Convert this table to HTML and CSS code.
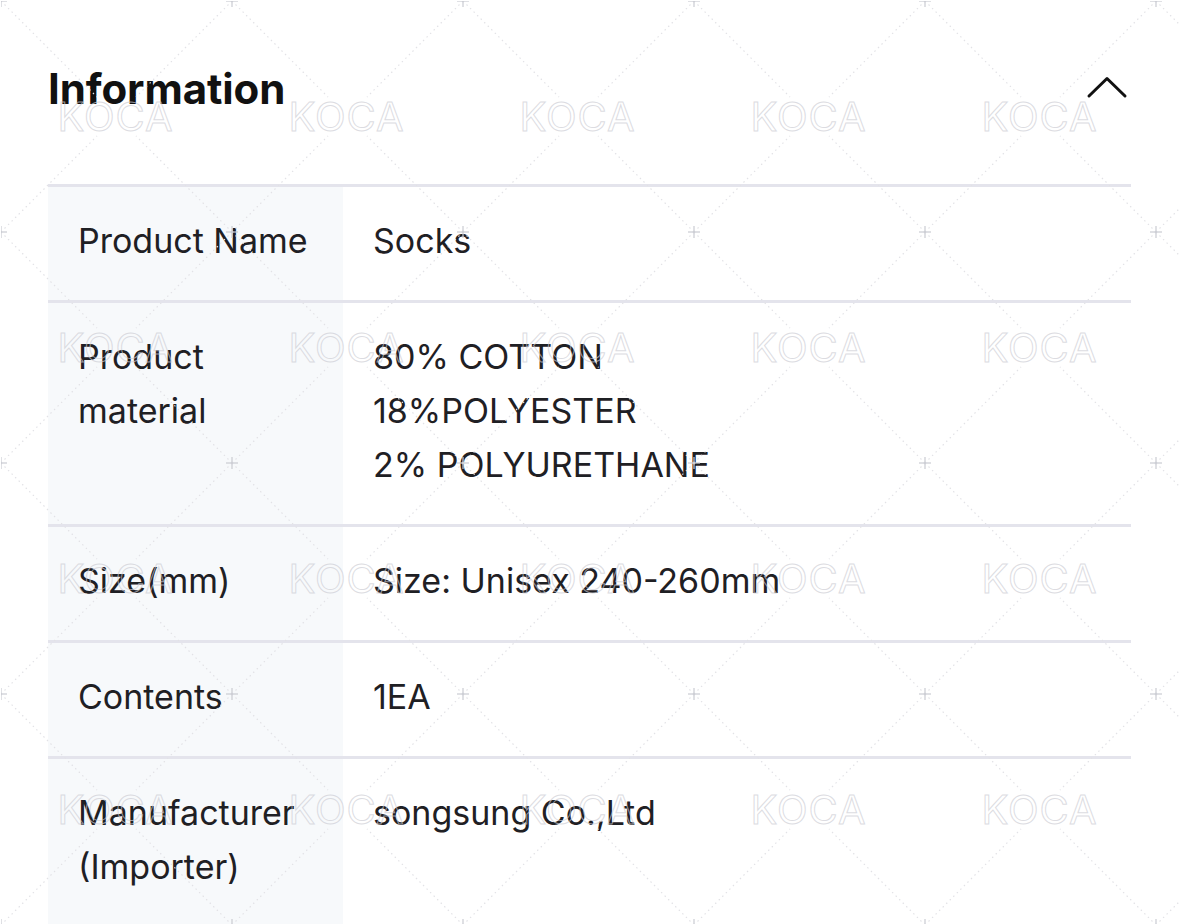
FILE: index.html
```html
<!DOCTYPE html>
<html lang="en">
<head>
    <meta charset="UTF-8">
    <meta name="viewport" content="width=device-width, initial-scale=1.0">
    <title>Product Information</title>
    <link rel="stylesheet" href="styles.css">
</head>
<body>
    <div class="page">
        <!-- Information section -->
        <section class="info">
            <div class="info-head">
                <h2 class="info-title">Information</h2>
                <button class="toggle-btn" aria-label="Collapse">
                    <svg width="42" height="24" viewBox="0 0 42 24">
                        <polyline points="3,20 21,2.5 39,20" fill="none" stroke="#111" stroke-width="3" stroke-linecap="round" stroke-linejoin="round"/>
                    </svg>
                </button>
            </div>

            <table class="info-table">
                <tr>
                    <th>Product Name</th>
                    <td>Socks</td>
                </tr>
                <tr>
                    <th>Product material</th>
                    <td>80% COTTON<br>18%POLYESTER<br>2% POLYURETHANE</td>
                </tr>
                <tr>
                    <th>Size(mm)</th>
                    <td>Size: Unisex 240-260mm</td>
                </tr>
                <tr>
                    <th>Contents</th>
                    <td>1EA</td>
                </tr>
                <tr>
                    <th>Manufacturer (Importer)</th>
                    <td>songsung Co.,Ltd</td>
                </tr>
            </table>
        </section>

        <!-- Watermark overlay -->
        <div class="watermark" aria-hidden="true">
            <svg class="wm-lines" width="100%" height="100%">
                <defs>
                    <pattern id="wmTile" width="231" height="231" patternUnits="userSpaceOnUse">
                        <g stroke="#e2e2e6" stroke-width="1.2" stroke-dasharray="1.5 3.5" fill="none">
                            <line x1="0" y1="0" x2="96" y2="96"/>
                            <line x1="231" y1="0" x2="135" y2="96"/>
                            <line x1="0" y1="231" x2="96" y2="135"/>
                            <line x1="231" y1="231" x2="135" y2="135"/>
                        </g>
                        <g stroke="#c9cbd2" stroke-width="1.2">
                            <line x1="-6" y1="0" x2="6" y2="0"/>
                            <line x1="0" y1="-6" x2="0" y2="6"/>
                            <line x1="225" y1="0" x2="237" y2="0"/>
                            <line x1="231" y1="-6" x2="231" y2="6"/>
                            <line x1="-6" y1="231" x2="6" y2="231"/>
                            <line x1="0" y1="225" x2="0" y2="237"/>
                            <line x1="225" y1="231" x2="237" y2="231"/>
                            <line x1="231" y1="225" x2="231" y2="237"/>
                        </g>
                    </pattern>
                </defs>
                <rect width="100%" height="100%" fill="url(#wmTile)"/>
            </svg>
            <div class="wm-grid">
                <span>KOCA</span><span>KOCA</span><span>KOCA</span><span>KOCA</span><span>KOCA</span>
                <span>KOCA</span><span>KOCA</span><span>KOCA</span><span>KOCA</span><span>KOCA</span>
                <span>KOCA</span><span>KOCA</span><span>KOCA</span><span>KOCA</span><span>KOCA</span>
                <span>KOCA</span><span>KOCA</span><span>KOCA</span><span>KOCA</span><span>KOCA</span>
            </div>
        </div>
    </div>
</body>
</html>
```

FILE: styles.css
```css
* {
    margin: 0;
    padding: 0;
    box-sizing: border-box;
}

body {
    font-family: 'Inter', 'Noto Sans', sans-serif;
    background: #fff;
    color: #1f2024;
}

.page {
    position: relative;
    min-height: 100vh;
    overflow: hidden;
}

/* Header */
.info {
    padding: 61px 48px 0;
}

.info-head {
    display: flex;
    align-items: center;
    justify-content: space-between;
    margin-bottom: 67px;
}

.info-title {
    font-size: 42px;
    line-height: 56px;
    font-weight: 700;
    color: #111;
    letter-spacing: -0.1px;
}

.toggle-btn {
    background: none;
    border: none;
    cursor: pointer;
    display: flex;
    margin-right: 3px;
    margin-top: -2px;
}

/* Table */
.info-table {
    width: 100%;
    border-collapse: collapse;
    font-size: 34px;
    line-height: 54px;
}

.info-table tr {
    border-top: 3px solid #e4e4ec;
}

.info-table th,
.info-table td {
    padding: 27px 30px 32px;
    text-align: left;
    vertical-align: top;
    font-weight: 400;
    color: #1f2024;
}

.info-table th {
    width: 295px;
    background: #f7f9fb;
}

/* Watermark */
.watermark {
    position: absolute;
    top: 0;
    left: 0;
    width: 100%;
    height: 100%;
    pointer-events: none;
}

.wm-lines {
    position: absolute;
    top: 1px;
    left: 1px;
}

.wm-grid {
    position: absolute;
    top: 1px;
    left: 0;
    display: grid;
    grid-template-columns: repeat(5, 231px);
    grid-auto-rows: 231px;
}

.wm-grid span {
    display: flex;
    align-items: center;
    justify-content: center;
    font-size: 40px;
    font-weight: 400;
    letter-spacing: 1px;
    color: transparent;
    -webkit-text-stroke: 1px rgba(205, 205, 212, 0.7);
}
```
